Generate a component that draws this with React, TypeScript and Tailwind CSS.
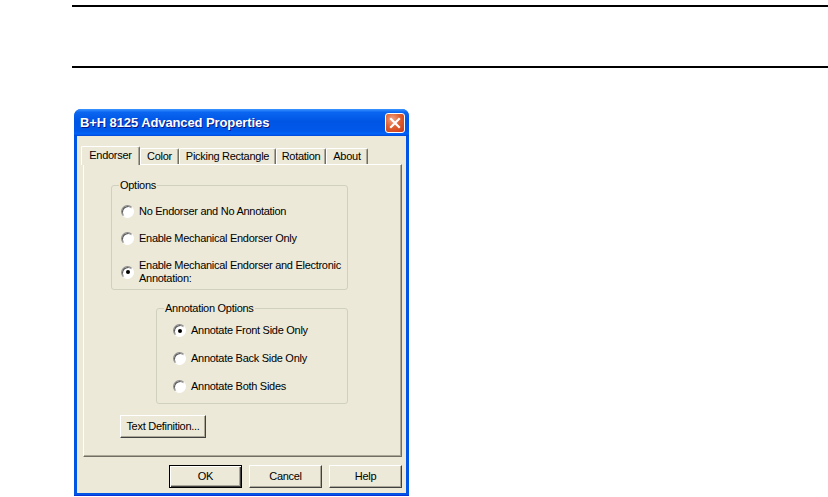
import type { ReactNode } from 'react';

function Radio({ checked }: { checked?: boolean }) {
  return (
    <span className="inline-flex items-center justify-center w-[13px] h-[13px] shrink-0 rounded-full border border-t-[#8c8c8c] border-l-[#8c8c8c] border-r-white border-b-white bg-white shadow-[inset_1px_1px_0_#5a5a5a]">
      {checked && <span className="w-[4px] h-[4px] rounded-full bg-black" />}
    </span>
  );
}

function Group({ label, className, children }: { label: string; className: string; children: ReactNode }) {
  return (
    <div className={`relative border border-[#D0D0BF] rounded-[3px] ${className}`}>
      <span className="absolute -top-[7px] left-[7px] px-[1px] bg-[#ECE9D8] leading-[13px]">{label}</span>
      {children}
    </div>
  );
}

function Button({ label, width, isDefault }: { label: string; width: string; isDefault?: boolean }) {
  return (
    <button
      className={`${width} h-[23px] bg-[#ECE9D8] text-[11px] tracking-[-0.28px] text-black ${
        isDefault
          ? 'border border-black shadow-[inset_1px_1px_0_#fff,inset_-1px_-1px_0_#404040,inset_-2px_-2px_0_#ACA899]'
          : 'border border-t-white border-l-white border-r-[#404040] border-b-[#404040] shadow-[inset_-1px_-1px_0_#ACA899]'
      }`}
    >
      {label}
    </button>
  );
}

const tabs = [
  { label: 'Color', width: 'w-[39px]' },
  { label: 'Picking Rectangle', width: 'w-[97px]' },
  { label: 'Rotation', width: 'w-[50px]' },
  { label: 'About', width: 'w-[42px]' },
];

export default function App() {
  return (
    <div className="w-[828px] h-[497px] bg-white overflow-hidden font-['Liberation_Sans',Arial,sans-serif] text-[11px] tracking-[-0.28px] text-black">
      {/* rules */}
      <div className="ml-[72px] mt-[5px] h-[63px] border-t-2 border-b-2 border-black" />

      {/* Dialog */}
      <div className="ml-[74px] mt-[41px] w-[335px] h-[387px] flex flex-col rounded-t-[7px] overflow-hidden bg-[#0055E5] border-b border-[#0831D9]">
        {/* Title bar */}
        <div className="h-[27px] shrink-0 flex items-center justify-between pl-[6px] pr-[4px] bg-[linear-gradient(to_bottom,#3D95FF_0%,#0A66F0_12%,#0055E5_45%,#0058EA_80%,#0063F7_92%,#0048D8_100%)]">
          <span className="text-white font-bold text-[13px] tracking-[-0.1px] [text-shadow:1px_1px_0_#0A1883]">
            B+H 8125 Advanced Properties
          </span>
          <span className="w-[20px] h-[20px] rounded-[3px] border border-white bg-[radial-gradient(circle_at_35%_30%,#F1A489_0%,#E0602F_45%,#C8391B_100%)] flex items-center justify-center">
            <svg width="12" height="12" viewBox="0 0 12 12">
              <path d="M2 2 L10 10 M10 2 L2 10" stroke="white" strokeWidth="2.2" strokeLinecap="square" />
            </svg>
          </span>
        </div>

        {/* Body */}
        <div className="flex-1 mx-[3px] mb-[2px] bg-[#ECE9D8] flex flex-col pl-[6px] pr-[4px] pt-[10px]">
          {/* Tab strip */}
          <div className="h-[18px] flex items-end">
            <div className="relative z-10 -ml-[2px] -mb-px h-[19px] w-[59px] bg-[#ECE9D8] border-l border-t border-white border-r border-r-[#716F64] rounded-t-[2px] shadow-[inset_-1px_0_0_#ACA899] flex items-center justify-center pb-[2px]">
              Endorser
            </div>
            {tabs.map(tab => (
              <div
                key={tab.label}
                className={`${tab.width} h-[16px] bg-[#ECE9D8] border-l border-t border-white border-r border-r-[#716F64] rounded-t-[2px] shadow-[inset_-1px_0_0_#ACA899] flex items-center justify-center whitespace-nowrap`}
              >
                {tab.label}
              </div>
            ))}
          </div>

          {/* Tab panel */}
          <div className="h-[293px] border-l border-t border-white border-r border-b border-r-[#716F64] border-b-[#716F64] shadow-[inset_-1px_-1px_0_#ACA899] pt-[20px]">
            <Group label="Options" className="ml-[27px] w-[237px] h-[105px] pt-[19px] pl-[9px] flex flex-col gap-[14px]">
              <div className="flex items-center gap-[5px] leading-[13px]">
                <Radio />
                <span>No Endorser and No Annotation</span>
              </div>
              <div className="flex items-center gap-[5px] leading-[13px]">
                <Radio />
                <span>Enable Mechanical Endorser Only</span>
              </div>
              <div className="flex items-center gap-[5px] leading-[13px]">
                <Radio checked />
                <span className="whitespace-nowrap">
                  Enable Mechanical Endorser and Electronic
                  <br />
                  Annotation:
                </span>
              </div>
            </Group>

            <Group label="Annotation Options" className="mt-[18px] ml-[72px] w-[192px] h-[96px] pt-[15px] pl-[16px] flex flex-col gap-[15px]">
              <div className="flex items-center gap-[5px] leading-[13px]">
                <Radio checked />
                <span>Annotate Front Side Only</span>
              </div>
              <div className="flex items-center gap-[5px] leading-[13px]">
                <Radio />
                <span>Annotate Back Side Only</span>
              </div>
              <div className="flex items-center gap-[5px] leading-[13px]">
                <Radio />
                <span>Annotate Both Sides</span>
              </div>
            </Group>

            <div className="mt-[11px] ml-[36px]">
              <Button label="Text Definition..." width="w-[86px]" />
            </div>
          </div>

          {/* Dialog buttons */}
          <div className="mt-[8px] flex justify-end gap-[7px]">
            <Button label="OK" width="w-[73px]" isDefault />
            <Button label="Cancel" width="w-[73px]" />
            <Button label="Help" width="w-[73px]" />
          </div>
        </div>
      </div>
    </div>
  );
}
